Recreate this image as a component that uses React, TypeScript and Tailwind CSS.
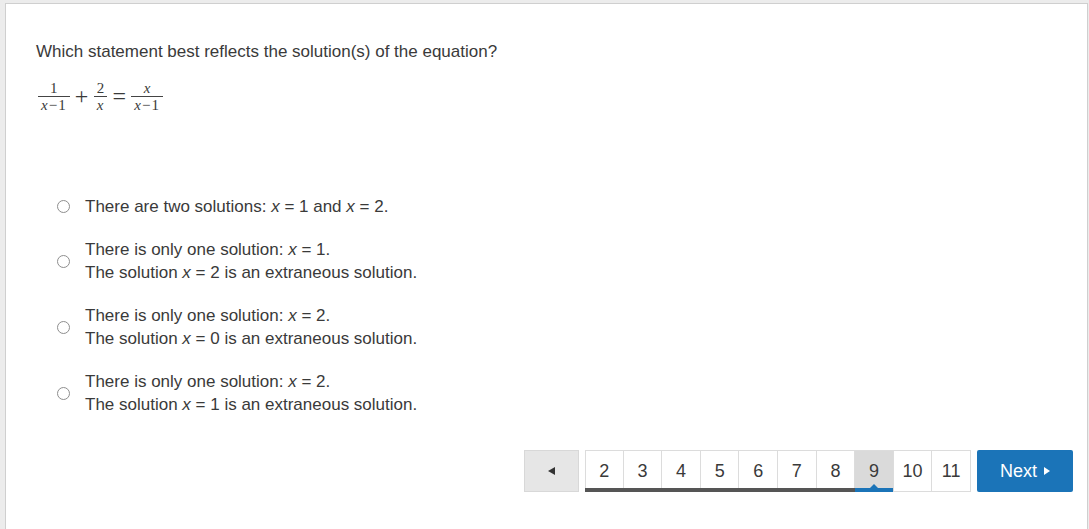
import React from "react";

const PAGES = [2, 3, 4, 5, 6, 7, 8, 9, 10, 11];
const CURRENT = 9;

function Frac({ num, den }: { num: React.ReactNode; den: React.ReactNode }) {
  return (
    <span className="inline-flex flex-col items-center px-[1px] text-[15px] leading-[14px]" style={{ fontFamily: '"Liberation Serif", "DejaVu Serif", serif' }}>
      <span className="pb-[1px]">{num}</span>
      <span className="border-t border-[#444] px-[3px] pt-[1px] tracking-[1px]">{den}</span>
    </span>
  );
}

const X = () => <i className="italic">x</i>;

function Op({ children }: { children: React.ReactNode }) {
  return (
    <span className="w-[14px] text-center text-[24px] leading-none pb-[1px]" style={{ fontFamily: '"Liberation Serif", serif' }}>
      {children}
    </span>
  );
}

function Radio() {
  return <span className="w-[13px] h-[13px] rounded-full border border-[#8e8e8e] bg-white shrink-0" />;
}

function Option({ lines }: { lines: React.ReactNode[] }) {
  return (
    <label className="flex items-center gap-[15px] pl-[21px]">
      <Radio />
      <div className="leading-[23px]">
        {lines.map((l, i) => (
          <div key={i}>{l}</div>
        ))}
      </div>
    </label>
  );
}

export default function App() {
  return (
    <div className="min-h-screen bg-[#ececec] pl-[5px] pt-[3px] pr-[1px]" style={{ fontFamily: '"Liberation Sans", Arial, sans-serif' }}>
      <div className="bg-white border border-[#cfcfcf] min-h-[540px] text-[#3a3a3a] text-[17px]">
        <div className="pl-[30px] pt-[36px]">
          <p className="leading-[24px]">Which statement best reflects the solution(s) of the equation?</p>

          {/* equation */}
          <div className="mt-[17px] h-[30px] flex items-center gap-[4px] pl-[1px]">
            <Frac num="1" den={<><X />−1</>} />
            <Op>+</Op>
            <Frac num="2" den={<X />} />
            <Op>=</Op>
            <Frac num={<X />} den={<><X />−1</>} />
          </div>

          {/* options */}
          <div className="mt-[84px] flex flex-col gap-[20px]">
            <Option lines={[<>There are two solutions: <X /> = 1 and <X /> = 2.</>]} />
            <Option
              lines={[
                <>There is only one solution: <X /> = 1.</>,
                <>The solution <X /> = 2 is an extraneous solution.</>,
              ]}
            />
            <Option
              lines={[
                <>There is only one solution: <X /> = 2.</>,
                <>The solution <X /> = 0 is an extraneous solution.</>,
              ]}
            />
            <Option
              lines={[
                <>There is only one solution: <X /> = 2.</>,
                <>The solution <X /> = 1 is an extraneous solution.</>,
              ]}
            />
          </div>
        </div>

        {/* pagination */}
        <div className="mt-[34px] flex justify-end items-start gap-[6px] pr-[14px]">
          <button className="w-[55px] h-[42px] bg-[#e6e6e6] border border-[#d8d8d8] flex items-center justify-center text-[#333]">
            <svg width="7" height="8" viewBox="0 0 7 8"><path d="M7 0 L0 4 L7 8 Z" fill="#333" /></svg>
          </button>
          <div className="flex">
            {PAGES.map((p, i) => {
              const active = p === CURRENT;
              const before = p < CURRENT;
              return (
                <div
                  key={p}
                  className={`relative w-[38.6px] h-[42px] flex items-center justify-center text-[18px] border-y border-r border-[#dcdcdc] ${i === 0 ? "border-l" : ""} ${active ? "bg-[#dadada]" : "bg-white"}`}
                >
                  {p}
                  {before && <span className="absolute left-[-1px] right-[-1px] bottom-[-1px] h-[4px] bg-[#555]" />}
                  {active && (
                    <>
                      <span className="absolute left-0 right-0 bottom-[-1px] h-[4px] bg-[#1b74b8]" />
                      <span className="absolute left-1/2 -translate-x-1/2 bottom-[3px] w-0 h-0 border-l-[4px] border-r-[4px] border-b-[4px] border-l-transparent border-r-transparent border-b-[#1b74b8]" />
                    </>
                  )}
                </div>
              );
            })}
          </div>
          <button className="w-[96px] h-[42px] bg-[#1b74b8] rounded-[2px] text-white text-[18px] flex items-center justify-center gap-[7px]">
            Next
            <svg width="6" height="8" viewBox="0 0 6 8"><path d="M0 0 L6 4 L0 8 Z" fill="#fff" /></svg>
          </button>
        </div>
      </div>
    </div>
  );
}
